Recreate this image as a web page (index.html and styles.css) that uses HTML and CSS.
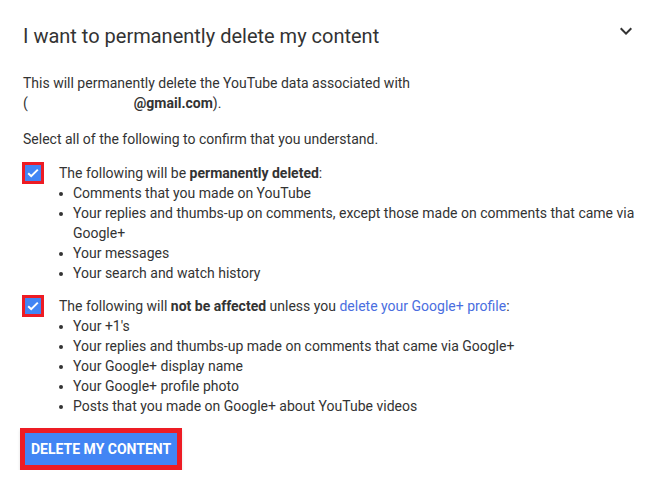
FILE: index.html
```html
<!DOCTYPE html>
<html>
<head>
<meta charset="utf-8">
<link rel="stylesheet" href="styles.css">
</head>
<body>
<div class="panel">
  <div class="header">
    <h1 class="title">I want to permanently delete my content</h1>
    <svg class="chev" width="24" height="24" viewBox="0 0 24 24"><path d="M16.59 8.59L12 13.17 7.41 8.59 6 10l6 6 6-6z" fill="#333"/></svg>
  </div>
  <p class="intro">This will permanently delete the YouTube data associated with<br>(<span class="redact"></span><b>@gmail.com</b>).</p>
  <p class="select">Select all of the following to confirm that you understand.</p>

  <div class="row first">
    <span class="box"><svg width="16" height="16" viewBox="0 0 16 16"><path d="M3.2 8.2l3 3 6.6-6.6" fill="none" stroke="#fff" stroke-width="2"/></svg></span>
    <div class="body">
      <div class="lead">The following will be <b>permanently deleted</b>:</div>
      <ul class="list">
        <li>Comments that you made on YouTube</li>
        <li>Your replies and thumbs-up on comments, except those made on comments that came via Google+</li>
        <li>Your messages</li>
        <li>Your search and watch history</li>
      </ul>
    </div>
  </div>

  <div class="row second">
    <span class="box"><svg width="16" height="16" viewBox="0 0 16 16"><path d="M3.2 8.2l3 3 6.6-6.6" fill="none" stroke="#fff" stroke-width="2"/></svg></span>
    <div class="body">
      <div class="lead">The following will <b>not be affected</b> unless you <a class="link" href="#">delete your Google+ profile</a>:</div>
      <ul class="list">
        <li>Your +1's</li>
        <li>Your replies and thumbs-up made on comments that came via Google+</li>
        <li>Your Google+ display name</li>
        <li>Your Google+ profile photo</li>
        <li>Posts that you made on Google+ about YouTube videos</li>
      </ul>
    </div>
  </div>

  <div class="actions">
    <button class="delete">DELETE MY CONTENT</button>
  </div>
</div>
</body>
</html>
```
FILE: styles.css
```css
html, body {
  margin: 0;
  padding: 0;
  background: #fff;
}
body {
  font-family: Roboto, "Liberation Sans", sans-serif;
  color: #333;
  font-size: 14px;
  line-height: 20px;
}
.panel {
  padding: 24px 20px 0 23px;
}
.header {
  display: flex;
  justify-content: space-between;
  align-items: flex-start;
}
.title {
  margin: 0;
  font-size: 20px;
  font-weight: 400;
  line-height: 24px;
  color: #333;
}
.chev {
  margin-top: -5px;
  margin-right: 0;
}
.intro {
  margin: 25px 0 0;
}
.redact {
  display: inline-block;
  width: 106px;
}
.select {
  margin: 16px 0 0;
}
.row {
  display: flex;
  margin-left: -1px;
}
.row.first { margin-top: 14px; }
.row.second { margin-top: 13px; }
.box {
  width: 16px;
  height: 16px;
  border: 3px solid #ed1c24;
  background: #4285f4;
  flex-shrink: 0;
  display: flex;
  margin-top: -1px;
}
.body {
  margin-left: 15px;
}
.link {
  color: #4a6ee0;
  text-decoration: none;
}
.list {
  list-style: none;
  margin: 0;
  padding: 0;
}
.list li {
  display: flex;
}
.list li::before {
  content: "";
  width: 4px;
  height: 4px;
  border-radius: 50%;
  background: #333;
  flex-shrink: 0;
  margin: 9px 10px 0 0;
}
.actions {
  margin-top: 12px;
  margin-left: -3px;
}
.delete {
  font-family: Roboto, "Liberation Sans", sans-serif;
  font-size: 14px;
  font-weight: 700;
  color: #fff;
  background: #4285f4;
  border: 5px solid #ed1c24;
  padding: 0 6px;
  height: 42px;
  line-height: 32px;
  box-shadow: 0 2px 3px rgba(0,0,0,0.12);
  cursor: pointer;
}
```
